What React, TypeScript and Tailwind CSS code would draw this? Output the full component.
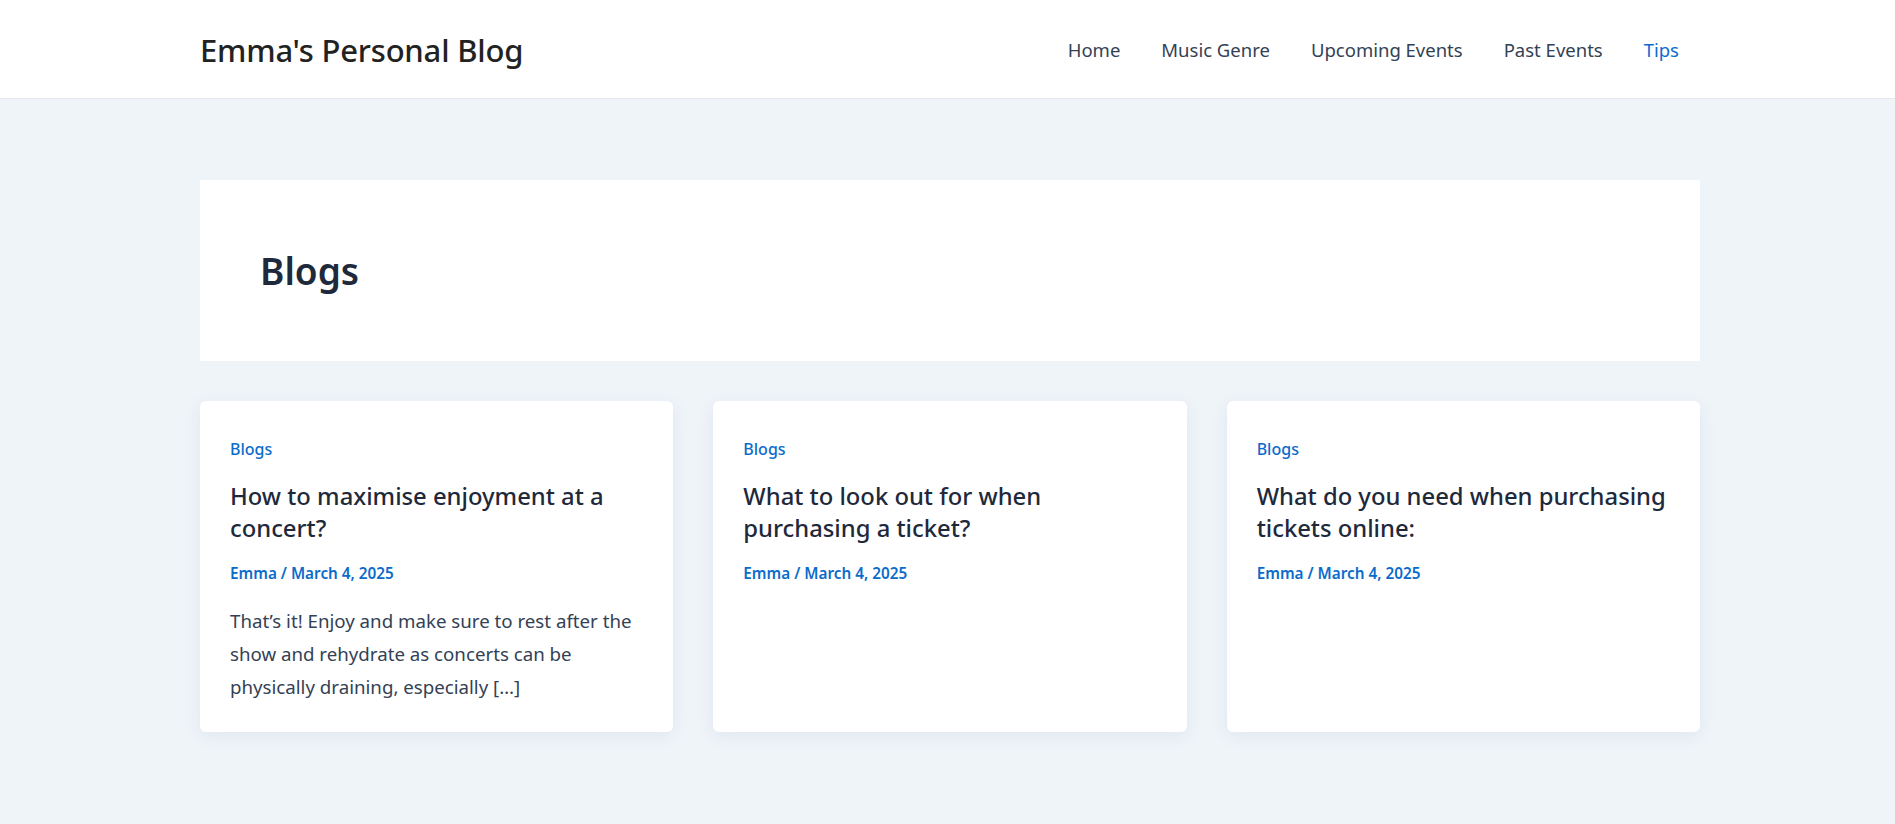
import React from "react";

const NAV = ["Home", "Music Genre", "Upcoming Events", "Past Events", "Tips"];

const POSTS = [
  {
    title: "How to maximise enjoyment at a concert?",
    excerpt:
      "That’s it! Enjoy and make sure to rest after the show and rehydrate as concerts can be physically draining, especially […]",
  },
  { title: "What to look out for when purchasing a ticket?", excerpt: "" },
  { title: "What do you need when purchasing tickets online:", excerpt: "" },
];

function Header() {
  return (
    <header className="h-[99px] bg-white border-b border-[#e5e9ef]">
      <div className="ml-[200px] w-[1500px] h-full flex items-center justify-between pt-[2px]">
        <div className="text-[31px] font-medium text-[#222222] tracking-[-0.2px]">Emma's Personal Blog</div>
        <nav className="flex items-center gap-[41px] pr-[21px] text-[18.5px]">
          {NAV.map((n) => (
            <a key={n} href="#" className={n === "Tips" ? "text-[#0b6bcb]" : "text-[#334155]"}>
              {n}
            </a>
          ))}
        </nav>
      </div>
    </header>
  );
}

function PostCard({ title, excerpt }: { title: string; excerpt: string }) {
  return (
    <article className="bg-white rounded-md shadow-[0_4px_18px_rgba(30,60,110,0.07)] h-[331px] px-[30px] pt-[36px]">
      <a href="#" className="block text-[16px] leading-[24px] font-medium text-[#0b6bcb]">Blogs</a>
      <h2 className="mt-[19px] text-[23.8px] leading-[32px] font-medium text-[#1e293b]">{title}</h2>
      <div className="mt-[18px] text-[15.3px] leading-[22px] font-semibold text-[#0b6bcb]">Emma / March 4, 2025</div>
      {excerpt && (
        <p className="mt-[20px] text-[18.7px] leading-[33px] text-[#334155]">{excerpt}</p>
      )}
    </article>
  );
}

export default function App() {
  return (
    <div className="min-h-screen bg-[#eff4f9]" style={{ fontFamily: "'Noto Sans', 'Open Sans', sans-serif" }}>
      <Header />
      <main className="ml-[200px] w-[1500px] pt-[81px] pb-[92px]">
        <section className="bg-white h-[181px] flex items-center px-[60px]">
          <h1 className="text-[37px] font-semibold text-[#1e293b]">Blogs</h1>
        </section>
        <div className="mt-[40px] grid grid-cols-3 gap-[40px]">
          {POSTS.map((p) => (
            <PostCard key={p.title} title={p.title} excerpt={p.excerpt} />
          ))}
        </div>
      </main>
    </div>
  );
}
